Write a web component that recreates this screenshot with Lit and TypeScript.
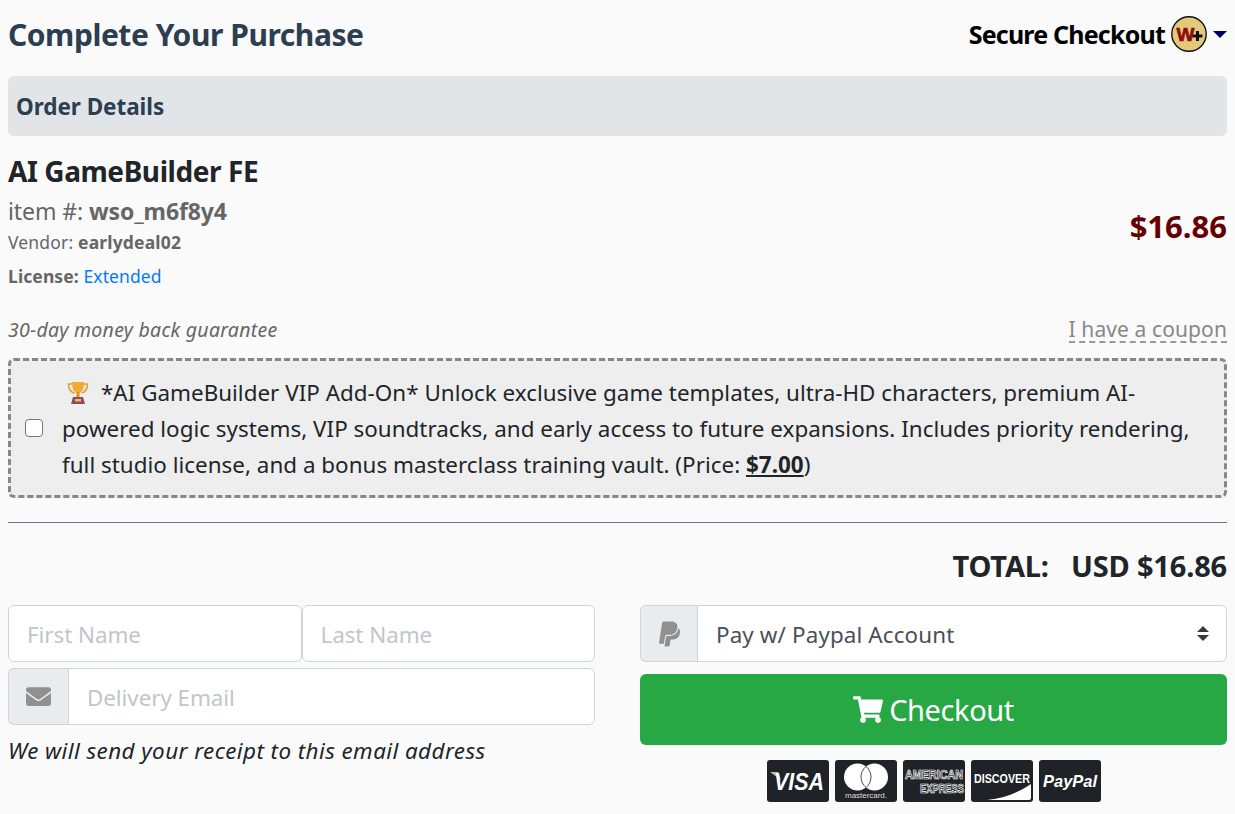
import { LitElement, html, css, svg } from "lit";
import { customElement } from "lit/decorators.js";

const CART = "M528.12 301.319l47.273-208C578.806 78.301 567.391 64 551.99 64H159.208l-9.166-44.81C147.758 8.021 137.93 0 126.529 0H24C10.745 0 0 10.745 0 24v16c0 13.255 10.745 24 24 24h69.883l70.248 343.435C147.325 417.1 136 435.222 136 456c0 30.928 25.072 56 56 56s56-25.072 56-56c0-15.674-6.447-29.835-16.824-40h209.647C430.447 426.165 424 440.326 424 456c0 30.928 25.072 56 56 56s56-25.072 56-56c0-22.172-12.888-41.332-31.579-50.405l5.517-24.276c3.413-15.018-8.002-29.319-23.403-29.319H218.117l-6.545-32h293.145c11.206 0 20.92-7.754 23.403-18.681z";
const ENV = "M502.3 190.8c3.9-3.1 9.7-.2 9.7 4.7V400c0 26.5-21.5 48-48 48H48c-26.5 0-48-21.5-48-48V195.6c0-5 5.7-7.8 9.7-4.7 22.4 17.4 52.1 39.5 154.1 113.6 21.1 15.4 56.7 47.8 92.2 47.6 35.7.3 72-32.8 92.3-47.6 102-74.1 131.6-96.3 154-113.7zM256 320c23.2.4 56.6-29.2 73.4-41.4 132.7-96.3 142.8-104.7 173.4-128.7 5.8-4.5 9.2-11.5 9.2-18.9v-19c0-26.5-21.5-48-48-48H48C21.5 64 0 85.5 0 112v19c0 7.4 3.4 14.3 9.2 18.9 30.6 23.9 40.7 32.4 173.4 128.7 16.8 12.2 50.2 41.8 73.4 41.4z";
const PP = "M111.4 295.9c-3.5 19.2-17.4 108.7-21.5 134-.3 1.8-1 2.5-3 2.5H12.3c-7.6 0-13.1-6.6-12.1-13.9L58.8 46.6c1.5-9.6 10.1-16.9 20-16.9 152.3 0 165.1-3.7 204 11.4 60.1 23.3 65.6 79.5 44 140.3-21.5 62.6-72.5 89.5-140.1 90.3-43.4.7-69.5-7-75.3 24.2zM357.1 152c-1.8-1.3-2.5-1.8-3 1.3-2 11.4-5.1 22.5-8.8 33.6-39.9 113.8-150.5 103.9-204.5 103.9-6.1 0-10.1 3.3-10.9 9.4-22.6 140.4-27.1 169.7-27.1 169.7-1 7.1 3.5 12.9 10.6 12.9h63.5c8.6 0 15.7-6.3 17.4-14.9.7-5.4-1.1 6.1 14.4-91.3 4.6-22 14.3-19.7 29.3-19.7 71 0 126.4-28.8 142.9-112.3 6.5-34.8 4.6-71.4-23.8-92.6z";

@customElement("app-root")
export class AppRoot extends LitElement {
  static styles = css`
    :host { display: block; min-height: 814px; background: #fafafa; box-sizing: border-box; padding: 0 8px;
      font-family: "Noto Sans", "Open Sans", sans-serif; color: #212529; overflow: hidden; }
    * { box-sizing: border-box; }
    .head { height: 76px; padding-bottom: 7px; display: flex; align-items: center; justify-content: space-between; }
    .title { margin: 0; font-size: 30px; font-weight: 700; color: #2c3e50; letter-spacing: -0.45px; }
    .secure { display: flex; align-items: center; font-size: 25px; font-weight: 700; color: #000; letter-spacing: -0.8px; padding-bottom: 1px; }
    .badge { width: 36px; height: 36px; margin-left: 6px; display: block; }
    .caret { margin-left: 6px; width: 0; height: 0; border-left: 7px solid transparent; border-right: 7px solid transparent; border-top: 7px solid #00006b; }
    .bar { height: 60px; background: #e2e5e8; border-radius: 6px; display: flex; align-items: center; padding: 0 8px;
      font-size: 22.5px; font-weight: 700; color: #2c3e50; letter-spacing: -0.05px; }
    .item { display: flex; justify-content: space-between; align-items: center; height: 158px; }
    .name { height: 70px; padding-bottom: 1px; font-size: 28px; font-weight: 700; letter-spacing: -0.42px; display: flex; align-items: center; }
    .info { align-self: flex-start; }
    .no { font-size: 23px; color: #666; height: 30px; line-height: 30px; margin-top: -10px; letter-spacing: -0.1px; }
    .no b, .ven b, .lic b { font-weight: 700; }
    .ven { font-size: 17.5px; color: #666; height: 32px; line-height: 32px; letter-spacing: .17px; }
    .lic { font-size: 17.5px; color: #666; height: 36px; line-height: 36px; letter-spacing: .1px; }
    .lic a { color: #007bff; text-decoration: none; }
    .price { font-size: 31px; font-weight: 700; color: #660000; letter-spacing: 0; margin-top: 21px; }
    .guar { display: flex; justify-content: space-between; align-items: flex-end; height: 64px; padding-bottom: 15px; }
    .guar i { font-size: 19.5px; color: #666; letter-spacing: .27px; }
    .coupon { font-size: 21px; color: #888; border-bottom: 2px dashed #999; line-height: 24px; letter-spacing: .1px; }
    .addon { height: 140px; border: 3px dashed #888; border-radius: 6px; background: #eee; display: flex; align-items: center; padding: 0 8px 0 14px;
      font-size: 22.4px; line-height: 36px; letter-spacing: .02px; }
    .addon > div { padding-top: 1px; }
    .cb { appearance: none; flex: none; width: 18px; height: 18px; margin: 0 19px 0 0; background: #fff; border: 1.5px solid #767676; border-radius: 4px; }
    .tro { display: inline-block; width: 22px; height: 24px; vertical-align: -4px; margin: 0 12px 0 5px; }
    .addon b { font-weight: 700; text-decoration: underline; }
    hr { margin: 24px 0 0; border: 0; border-top: 1px solid #6c7293; }
    .total { height: 82px; padding-top: 2px; display: flex; justify-content: flex-end; align-items: center; font-size: 29px; font-weight: 700; letter-spacing: -0.17px; white-space: pre; }
    .cols { display: grid; grid-template-columns: 587px 587px; gap: 45px; }
    .names { display: flex; }
    input.f { flex: 1; min-width: 0; height: 57px; border: 1px solid #ced4da; border-radius: 6px; background: #fff; padding: 2px 18px 0; font: inherit; font-size: 22.4px; letter-spacing: -0.05px; }
    input.f::placeholder { color: #c0c6cc; opacity: 1; }
    .group { display: flex; height: 57px; margin-top: 6px; }
    .addonicon { flex: none; width: 60px; background: #e9ecef; border: 1px solid #ced4da; border-right: 0; border-radius: 6px 0 0 6px; display: flex; align-items: center; justify-content: center; }
    .addonicon svg { fill: #909090; display: block; }
    .addonicon.pp { width: 57px; }
    .group input.f { border-radius: 0 6px 6px 0; }
    .note { font-size: 22.4px; font-style: italic; margin-top: 8px; line-height: 36px; letter-spacing: .43px; }
    .right .group { margin-top: 0; }
    .sel { flex: 1; position: relative; }
    select { width: 100%; height: 57px; appearance: none; border: 1px solid #ced4da; border-radius: 0 6px 6px 0; background: #fff; color: #495057; padding: 2px 18px 0; font: inherit; font-size: 22.4px; letter-spacing: .13px; }
    .arrows { position: absolute; right: 17px; top: 21px; display: block; }
    .btn { width: 100%; height: 71px; margin-top: 12px; background: #28a745; border: 0; border-radius: 6px; color: #fff; font: inherit; font-size: 29px; letter-spacing: -0.4px; display: flex; align-items: center; justify-content: center; gap: 6px; }
    .btn svg { fill: #fff; display: block; }
    .cards { display: flex; justify-content: center; gap: 6px; margin-top: 15px; }
    .cards svg { display: block; width: 62px; height: 42px; }
  `;

  private cards() {
    const base = svg`<rect width="62" height="42" rx="3" fill="#1f2327"/>`;
    const f = "Liberation Sans, sans-serif";
    return html`
      <svg viewBox="0 0 62 42">${base}
        <path d="M3 12h8l3 8z" fill="#bdbdbd"/>
        <text x="32" y="30" text-anchor="middle" font-family=${f} font-size="24" font-weight="700" font-style="italic" fill="#fff" textLength="50" lengthAdjust="spacingAndGlyphs">VISA</text></svg>
      <svg viewBox="0 0 62 42">${base}
        <circle cx="22.5" cy="17" r="13.500" fill="#fff"/><circle cx="39.5" cy="17" r="13.500" fill="#fff"/>
        <path d="M31 6.510A13.500 13.500 0 0 1 31 27.490A13.500 13.500 0 0 1 31 6.510z" fill="#fff" stroke="#1f2327" stroke-width=".8"/>
        <text x="31" y="38" text-anchor="middle" font-family=${f} font-size="8" fill="#ddd" textLength="42">mastercard.</text></svg>
      <svg viewBox="0 0 62 42">${base}
        <text x="31" y="19" text-anchor="middle" font-family=${f} font-size="12.500" font-weight="700" fill="#1f2327" stroke="#fff" stroke-width=".7" textLength="58" lengthAdjust="spacingAndGlyphs">AMERICAN</text>
        <text x="39" y="33" text-anchor="middle" font-family=${f} font-size="12.500" font-weight="700" fill="#1f2327" stroke="#fff" stroke-width=".7" textLength="44" lengthAdjust="spacingAndGlyphs">EXPRESS</text></svg>
      <svg viewBox="0 0 62 42">${base}
        <text x="31" y="23" text-anchor="middle" font-family=${f} font-size="12" font-weight="700" fill="#fff" textLength="56" lengthAdjust="spacingAndGlyphs">DISCOVER</text>
        <path d="M16 40c18-2 32-8 44-16v14a2 2 0 0 1-2 2z" fill="#fff"/></svg>
      <svg viewBox="0 0 62 42">${base}
        <text x="31" y="27" text-anchor="middle" font-family=${f} font-size="17" font-weight="700" font-style="italic" fill="#fff" textLength="54" lengthAdjust="spacingAndGlyphs">PayPal</text></svg>`;
  }

  render() {
    return html`
      <div class="head">
        <h1 class="title">Complete Your Purchase</h1>
        <div class="secure">Secure Checkout
          <svg class="badge" viewBox="0 0 36 36">
            <circle cx="18" cy="18" r="17.2" fill="#e3c97c" stroke="#111" stroke-width="1.4"/>
            <text x="14" y="25" text-anchor="middle" font-family="Liberation Sans, sans-serif" font-size="19" font-weight="700" fill="#8f0d0d" stroke="#8f0d0d" stroke-width=".7">W</text>
            <path d="M25 15h3v3.500h3.500v3h-3.500v3.500h-3v-3.500h-3.500v-3h3.500z" fill="#111"/>
          </svg>
          <span class="caret"></span>
        </div>
      </div>
      <div class="bar">Order Details</div>
      <div class="item">
        <div class="info">
          <div class="name">AI GameBuilder FE</div>
          <div class="no">item #: <b>wso_m6f8y4</b></div>
          <div class="ven">Vendor: <b>earlydeal02</b></div>
          <div class="lic"><b>License:</b> <a>Extended</a></div>
        </div>
        <div class="price">$16.86</div>
      </div>
      <div class="guar"><i>30-day money back guarantee</i><span class="coupon">I have a coupon</span></div>
      <div class="addon">
        <input class="cb" type="checkbox" />
        <div>
          <svg class="tro" viewBox="0 0 22 24">
            <path d="M5 3H1.500c0 5 2 8 6 9M17 3h3.500c0 5-2 8-6 9" fill="none" stroke="#e0a030" stroke-width="1.600"/>
            <path d="M5 1h12c0 7-2 11-6 11S5 8 5 1z" fill="#f0ab35"/>
            <rect x="9.500" y="11" width="3" height="5" fill="#d98f25"/>
            <path d="M6 16h10l2 7H4z" fill="#8e4b5f"/>
            <rect x="8" y="18" width="6" height="2.500" fill="#f0c050"/>
          </svg>*AI GameBuilder VIP Add-On* Unlock exclusive game templates, ultra-HD characters, premium AI-powered logic systems, VIP soundtracks, and early access to future expansions. Includes priority rendering, full studio license, and a bonus masterclass training vault. (Price: <b>$7.00</b>)
        </div>
      </div>
      <hr />
      <div class="total">TOTAL:   USD $16.86</div>
      <div class="cols">
        <div>
          <div class="names">
            <input class="f" placeholder="First Name" />
            <input class="f" placeholder="Last Name" />
          </div>
          <div class="group">
            <div class="addonicon"><svg width="25" height="25" viewBox="0 0 512 512"><path d=${ENV}/></svg></div>
            <input class="f" placeholder="Delivery Email" />
          </div>
          <div class="note">We will send your receipt to this email address</div>
        </div>
        <div class="right">
          <div class="group">
            <div class="addonicon pp"><svg width="21" height="28" viewBox="0 0 384 512"><path d=${PP}/></svg></div>
            <div class="sel">
              <select><option>Pay w/ Paypal Account</option></select>
              <svg class="arrows" width="14" height="15" viewBox="0 0 14 15"><path d="M7 0l6 6H1zM7 15l6-6H1z" fill="#343a40"/></svg>
            </div>
          </div>
          <button class="btn"><svg width="30" height="27" viewBox="0 0 576 512"><path d=${CART}/></svg>Checkout</button>
          <div class="cards">${this.cards()}</div>
        </div>
      </div>
    `;
  }
}
